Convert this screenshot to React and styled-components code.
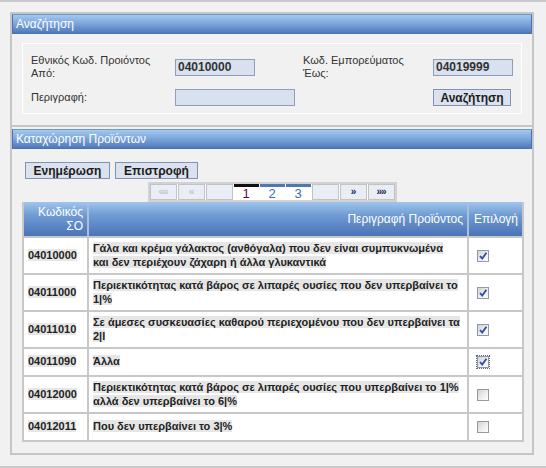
import React from "react";
import styled, { createGlobalStyle } from "styled-components";

const GlobalStyle = createGlobalStyle`
  body {
    margin: 0;
    background: #f1f1f1;
    font-family: "Liberation Sans", Arial, sans-serif;
    font-size: 12px;
    color: #2a2a2a;
  }
`;

const Page = styled.div`
  box-sizing: border-box;
  height: 468px;
  border-top: 2px solid #c9c9c9;
  border-bottom: 2px solid #c9c9c9;
  padding: 10px 0 0 10px;
`;

const Frame = styled.div`
  box-sizing: border-box;
  width: 524px;
  border: 2px solid #c6c6c6;
`;

const Section = styled.section`
  padding: ${(p) => (p.$first ? "0" : "2px 0 0")};
  border-bottom: ${(p) => (p.$first ? "2px solid #c6c6c6" : "none")};
`;

const SectionHeader = styled.div`
  box-sizing: border-box;
  height: 20px;
  padding: 0 3px;
  line-height: 19px;
  color: #fff;
  font-size: 12px;
  border: 1px solid #4a72b0;
  border-top-color: #6f98cc;
  background: linear-gradient(to bottom, #a3c9ee 0%, #7ea8dc 45%, #5079bb 100%);
`;

const SearchBox = styled.div`
  margin: 9px 10px 11px;
  border: 1px solid #ffffff;
`;

const SearchGrid = styled.div`
  display: grid;
  grid-template-columns: 144px 128px 130px auto;
  row-gap: 9px;
  align-items: center;
  padding: 10px 0 7px 8px;
`;

const Label = styled.div`
  font-size: 11px;
  line-height: 13px;
  color: #333;
`;

const Field = styled.div`
  box-sizing: border-box;
  width: ${(p) => p.$w}px;
  height: 17px;
  padding-left: 2px;
  line-height: 15px;
  background: #d9e1ee;
  border: 1px solid #8e9fbc;
  font-weight: bold;
  font-size: 12px;
  color: #333;
`;

const Button = styled.button`
  box-sizing: border-box;
  height: 17px;
  width: ${(p) => p.$w}px;
  padding: 0;
  background: #dbe2ee;
  border: 1px solid #8193b4;
  font-family: inherit;
  font-size: 12px;
  font-weight: bold;
  line-height: 14px;
  color: #1c1c1c;
`;

const Content = styled.div`
  padding: 13px 10px 11px;
`;

const Toolbar = styled.div`
  display: flex;
  gap: 5px;
  padding-left: 3px;
`;

const PagerRow = styled.div`
  display: flex;
  justify-content: center;
  margin-top: 3px;
`;

const Pager = styled.div`
  display: flex;
  gap: 1px;
  background: #fff;
  border: 2px solid #d2d2d2;
`;

const PageBtn = styled.span`
  box-sizing: border-box;
  width: 27px;
  height: 16px;
  text-align: center;
  line-height: 14px;
  background: #e8edf6;
  border: 1px solid #c3c3c3;
  font-size: 10px;
  font-weight: ${(p) => (p.$off ? "normal" : "bold")};
  color: ${(p) => (p.$off ? "#b5b9c2" : "#1d2a55")};
  letter-spacing: -1px;
`;

const PageNum = styled.span`
  box-sizing: border-box;
  width: 25px;
  height: 16px;
  text-align: center;
  border-top: 3px solid ${(p) => (p.$current ? "#111" : "#4d77b5")};
  line-height: 14px;
  font-size: 13px;
  color: ${(p) => (p.$current ? "#5a0f36" : "#3d6cb4")};
`;

const Table = styled.table`
  width: 500px;
  border-collapse: collapse;
  table-layout: fixed;
`;

const Th = styled.th`
  height: 34px;
  padding: 0 4px;
  text-align: right;
  vertical-align: middle;
  font-weight: normal;
  font-size: 12px;
  line-height: 14px;
  color: #fff;
  background: linear-gradient(to bottom, #9fc6ec 0%, #6f9ad2 40%, #4a74b6 100%);
  border-left: 2px solid #a9bfdc;
  border-right: 2px solid #a9bfdc;
  border-bottom: 2px solid #c8c8c8;
  &:first-child { border-left-color: #c8c8c8; }
  &:last-child { border-right-color: #c8c8c8; }
`;

const Td = styled.td`
  height: 18px;
  padding: ${(p) => (p.$check ? "4px 4px 4px 8px" : "4px")};
  vertical-align: middle;
  white-space: nowrap;
  overflow: hidden;
  line-height: 13.5px;
  background: #fff;
  border: 2px solid #c8c8c8;
  font-size: 11px;
  font-weight: bold;
  color: #222;
`;

const Mark = styled.span`
  background: #e6e6e6;
`;

const Box = styled.span`
  display: inline-block;
  box-sizing: border-box;
  width: 12px;
  height: 12px;
  vertical-align: middle;
  border: 1px solid ${(p) => (p.$checked ? "#8d99b0" : "#9a9a9a")};
  background: linear-gradient(135deg, #d2d2d2 0%, #f0f0f0 60%, #fdfdfd 100%);
  outline: ${(p) => (p.$focus ? "1px dotted #666" : "none")};
  outline-offset: 0;
  svg { display: block; }
`;

const Checkbox = ({ checked, focus }) => (
  <Box $checked={checked} $focus={focus}>
    {checked && (
      <svg width="10" height="10" viewBox="0 0 10 10">
        <path d="M2 5 L4.2 7.6 L8.4 1.8" fill="none" stroke="#2f4da3" strokeWidth="1.8" />
      </svg>
    )}
  </Box>
);

const products = [
  {
    code: "04010000",
    lines: ["Γάλα και κρέμα γάλακτος (ανθόγαλα) που δεν είναι συμπυκνωμένα", "και δεν περιέχουν ζάχαρη ή άλλα γλυκαντικά"],
    checked: true,
  },
  {
    code: "04011000",
    lines: ["Περιεκτικότητας κατά βάρος σε λιπαρές ουσίες που δεν υπερβαίνει το", "1|%"],
    checked: true,
  },
  {
    code: "04011010",
    lines: ["Σε άμεσες συσκευασίες καθαρού περιεχομένου που δεν υπερβαίνει τα", "2|l"],
    checked: true,
  },
  { code: "04011090", lines: ["Άλλα"], checked: true, focus: true },
  {
    code: "04012000",
    lines: ["Περιεκτικότητας κατά βάρος σε λιπαρές ουσίες που υπερβαίνει το 1|%", "αλλά δεν υπερβαίνει το 6|%"],
    checked: false,
  },
  { code: "04012011", lines: ["Που δεν υπερβαίνει το 3|%"], checked: false },
];

export default function App() {
  return (
    <>
      <GlobalStyle />
      <Page>
        <Frame>
          <Section $first>
            <SectionHeader>Αναζήτηση</SectionHeader>
            <SearchBox>
              <SearchGrid>
                <Label>
                  Εθνικός Κωδ. Προιόντος
                  <br />
                  Από:
                </Label>
                <Field $w={80}>04010000</Field>
                <Label>
                  Κωδ. Εμπορεύματος
                  <br />
                  Έως:
                </Label>
                <Field $w={80}>04019999</Field>
                <Label>Περιγραφή:</Label>
                <Field $w={120} />
                <div />
                <Button $w={78}>Αναζήτηση</Button>
              </SearchGrid>
            </SearchBox>
          </Section>

          <Section>
            <SectionHeader>Καταχώρηση Προϊόντων</SectionHeader>
            <Content>
              <Toolbar>
                <Button $w={85}>Ενημέρωση</Button>
                <Button $w={83}>Επιστροφή</Button>
              </Toolbar>
              <PagerRow>
                <Pager>
                  <PageBtn $off>««</PageBtn>
                  <PageBtn $off>«</PageBtn>
                  <PageBtn $off />
                  <PageNum $current>1</PageNum>
                  <PageNum>2</PageNum>
                  <PageNum>3</PageNum>
                  <PageBtn $off />
                  <PageBtn>»</PageBtn>
                  <PageBtn>»»</PageBtn>
                </Pager>
              </PagerRow>
              <Table>
                <colgroup>
                  <col style={{ width: 65 }} />
                  <col style={{ width: 380 }} />
                  <col style={{ width: 55 }} />
                </colgroup>
                <thead>
                  <tr>
                    <Th>
                      Κωδικός
                      <br />
                      ΣΟ
                    </Th>
                    <Th>Περιγραφή Προϊόντος</Th>
                    <Th>Επιλογή</Th>
                  </tr>
                </thead>
                <tbody>
                  {products.map((p) => (
                    <tr key={p.code}>
                      <Td>
                        <Mark>{p.code}</Mark>
                      </Td>
                      <Td>
                        {p.lines.map((line, i) => (
                          <React.Fragment key={i}>
                            {i > 0 && <br />}
                            <Mark>{line}</Mark>
                          </React.Fragment>
                        ))}
                      </Td>
                      <Td $check>
                        <Checkbox checked={p.checked} focus={p.focus} />
                      </Td>
                    </tr>
                  ))}
                </tbody>
              </Table>
            </Content>
          </Section>
        </Frame>
      </Page>
    </>
  );
}
